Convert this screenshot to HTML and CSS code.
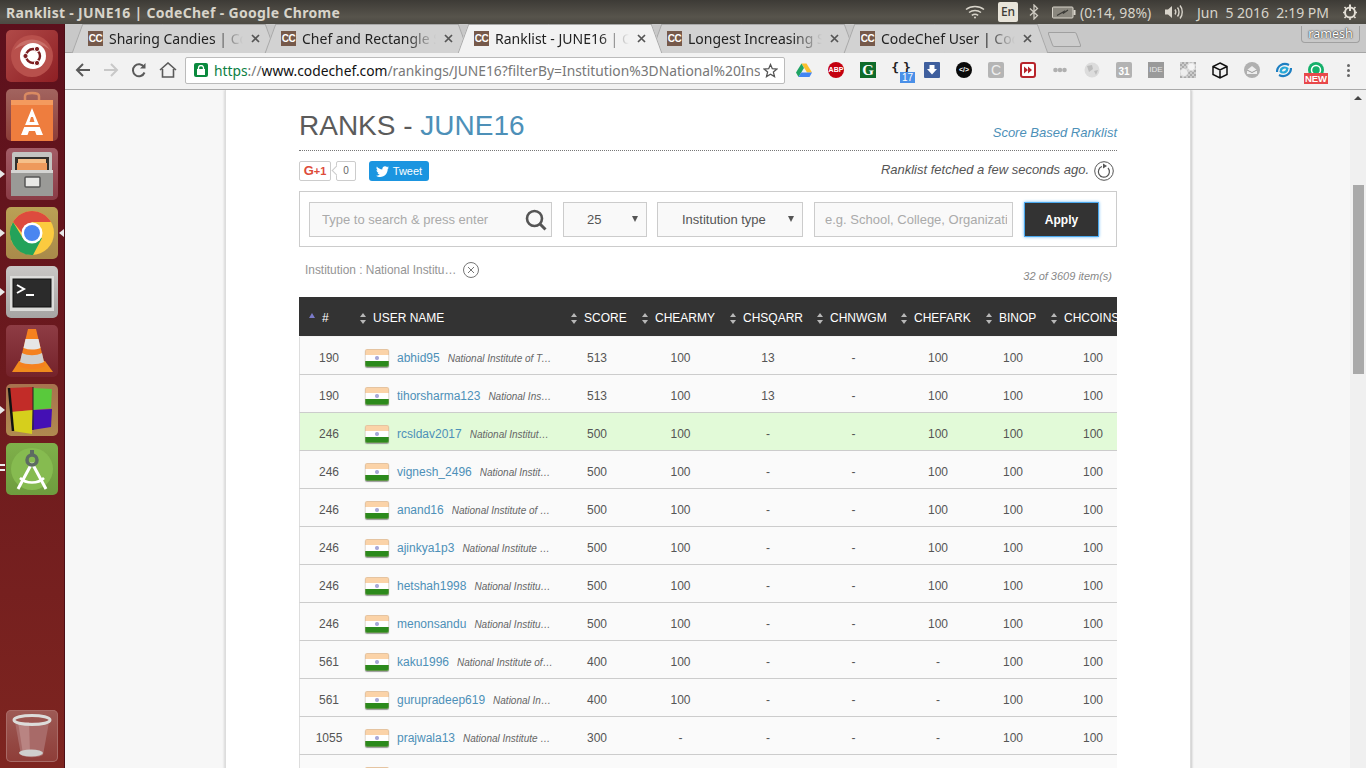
FILE: index.html
```html
<!DOCTYPE html>
<html lang="en">

<head>
    <meta charset="UTF-8">
    <title>Ranklist - JUNE16 | CodeChef - Google Chrome</title>
    <link rel="stylesheet" href="styles.css">
</head>

<body>
    <!-- top panel -->
    <header class="panel">
        <div class="panel-title">Ranklist - JUNE16 | CodeChef - Google Chrome</div>
        <div class="panel-tray">
            <svg class="tray-wifi" width="20" height="14" viewBox="0 0 20 14" fill="none" stroke="#d8d4ca" stroke-width="1.5"><path d="M1 4.5C6 0.5 14 0.5 19 4.5" /><path d="M4 7.5C7.5 4.8 12.5 4.8 16 7.5" /><path d="M6.8 10.3C8.6 9 11.4 9 13.2 10.3" /><circle cx="10" cy="12.6" r="1" fill="#d8d4ca" stroke="none" /></svg>
            <span class="tray-lang">En</span>
            <svg class="tray-bt" width="10" height="16" viewBox="0 0 10 16" fill="none" stroke="#cfcbc2" stroke-width="1.3"><path d="M1 4.5L8.5 11.5L5 15V1L8.5 4.5L1 11.5" /></svg>
            <svg class="tray-batt" width="24" height="13" viewBox="0 0 24 13"><rect x="0.5" y="1" width="20.5" height="11" rx="1" fill="#8a877e" stroke="#d8d4ca" /><rect x="21.5" y="4" width="2" height="5" fill="#d8d4ca" /><path d="M5 9.5L12 5.5L11 7.5L16 4" stroke="#3c3b37" stroke-width="1.2" fill="none" /></svg>
            <span class="tray-text tray-pct">(0:14, 98%)</span>
            <svg class="tray-vol" width="20" height="16" viewBox="0 0 20 16" fill="none" stroke="#d8d4ca" stroke-width="1.4"><path d="M1 5.5H4L8 2V14L4 10.5H1Z" fill="#d8d4ca" stroke="none" /><path d="M11 5.5C12 7 12 9 11 10.5" /><path d="M13.5 3.5C15.5 6 15.5 10 13.5 12.5" /><path d="M16 1.5C19 5 19 11 16 14.5" /></svg>
            <span class="tray-text tray-date">Jun &nbsp;5 2016 &nbsp;2:19 PM</span>
            <svg class="tray-gear" width="16" height="16" viewBox="0 0 16 16" fill="none" stroke="#e4e0d7" stroke-width="2"><circle cx="8" cy="8.5" r="5" /><path d="M8 0.5V7" stroke="#e4e0d7" /><path d="M8 13V16M1 8.5H3M13 8.5H15M2.5 3L4 4.5M13.5 3L12 4.5M2.5 14L4 12.5M13.5 14L12 12.5" stroke-width="1.6" /></svg>
        </div>
    </header>

    <div class="desktop">
        <!-- launcher -->
        <nav class="launcher">
            <div class="tile tile-dash">
                <svg width="52" height="52" viewBox="0 0 52 52"><circle cx="26" cy="26" r="21" fill="#b8504c" /><path d="M8 20C16 6 36 6 44 20C36 12 18 12 8 20Z" fill="#c9706a" /><circle cx="27" cy="26" r="13" fill="#fff" /><circle cx="27" cy="26" r="7" fill="none" stroke="#7d1f22" stroke-width="2.4" /><circle cx="19.5" cy="26" r="2.6" fill="#7d1f22" stroke="#fff" /><circle cx="31" cy="19" r="2.6" fill="#7d1f22" stroke="#fff" /><circle cx="31" cy="33" r="2.6" fill="#7d1f22" stroke="#fff" /></svg>
            </div>
            <div class="tile tile-store">
                <svg width="52" height="52" viewBox="0 0 52 52"><path d="M19 13V7C19 3 33 3 33 7V13" fill="none" stroke="#d98a62" stroke-width="2.500" /><path d="M5 11H47L47 52H5Z" fill="#ee7d3e" /><path d="M5 11H47L47 16H5Z" fill="#f49a5e" /><path d="M26 19L37 46H30.500L29 42H23L21.500 46H15Z" fill="#fff" /><path d="M25 28H27L28.500 33H23.500Z" fill="#ee7d3e" /><rect x="15" y="36" width="22" height="2" fill="#ee7d3e" /></svg>
            </div>
            <div class="tile tile-files pip-left">
                <svg width="52" height="52" viewBox="0 0 52 52"><rect x="6" y="4" width="40" height="44" rx="2" fill="#c4c4c1" /><rect x="9" y="9" width="34" height="13" fill="#33302c" /><rect x="12" y="11" width="28" height="4" fill="#f5c08a" /><rect x="11" y="15" width="30" height="7" fill="#ee9a5c" /><rect x="5" y="22" width="42" height="26" fill="#9a9a97" /><rect x="5" y="22" width="42" height="3" fill="#d4d4d2" /><rect x="19" y="29" width="15" height="10" rx="1" fill="#e8e8e6" stroke="#555" stroke-width="1.500" /></svg>
            </div>
            <div class="tile tile-chrome pip-left pip-right">
                <svg width="52" height="52" viewBox="0 0 52 52"><circle cx="26" cy="26" r="22" fill="#fcca3f" /><path d="M7 15L18 33L36 31L27 48A22 22 0 0 1 7 15Z" fill="#23a25a" /><path d="M7 15A22 22 0 0 1 45 15H26L16 26Z" fill="#dd4b3e" /><circle cx="26" cy="26" r="10.500" fill="#fff" /><circle cx="26" cy="26" r="8" fill="#4a86f0" /></svg>
            </div>
            <div class="tile tile-term pip-left">
                <svg width="52" height="52" viewBox="0 0 52 52"><rect x="4" y="10" width="44" height="35" fill="#dcdcda" /><rect x="7" y="13" width="38" height="28" fill="#2b2b2b" stroke="#111" /><path d="M11 19L18 23L11 27" fill="none" stroke="#fff" stroke-width="2" /><rect x="20" y="28" width="8" height="2" fill="#fff" /></svg>
            </div>
            <div class="tile tile-vlc">
                <svg width="52" height="52" viewBox="0 0 52 52"><path d="M6 47L13 36H39L47 47Z" fill="#f08a1c" /><path d="M22 4H30L39 41C33 45 19 45 13 41Z" fill="#f5811f" /><path d="M19.500 14H32.500L34.500 23C29 25 23 25 17.500 23Z" fill="#e6e6e6" /><path d="M16 28C22 31 30 31 36 28L38 37C32 40 20 40 14 37Z" fill="#cfcfcf" /></svg>
            </div>
            <div class="tile tile-blocks pip-left">
                <svg width="52" height="52" viewBox="0 0 52 52"><path d="M3 4L27 3V26L5 28Z" fill="#c22c28" /><path d="M27 4L46 5L45 24L27 26Z" fill="#59c93c" /><path d="M5 28L27 26L26 50L7 47Z" fill="#d6cf1c" /><path d="M27 26L46 25L45 43L26 46Z" fill="#4410b4" /><path d="M3 4L7 47" stroke="#111" stroke-width="2.500" /><path d="M27 3V46" stroke="#222" /></svg>
            </div>
            <div class="tile tile-android pip-double">
                <svg width="52" height="52" viewBox="0 0 52 52"><circle cx="26" cy="26" r="21" fill="#86bb50" /><path d="M26 20L12 46M26 20L40 46" stroke="#fff" stroke-width="3" fill="none" /><path d="M14 35C20 41 32 41 38 35" stroke="#fff" stroke-width="2.500" fill="none" /><circle cx="26" cy="17" r="5" fill="none" stroke="#5d6b62" stroke-width="3.500" /><rect x="24" y="7" width="4" height="5" fill="#5d6b62" /></svg>
            </div>
            <div class="launcher-gap"></div>
            <div class="tile tile-trash">
                <svg width="52" height="52" viewBox="0 0 52 52"><path d="M9 12L15 45C20 48 32 48 37 45L43 12Z" fill="#a86a68" /><path d="M12 12L17 44H24L23 12Z" fill="#b98482" /><ellipse cx="26" cy="10" rx="18" ry="4.500" fill="none" stroke="#dcdcda" stroke-width="3" /><ellipse cx="25" cy="43" rx="12" ry="3.500" fill="#cfcfcd" /></svg>
            </div>
        </nav>

        <div class="window">
            <!-- tabs -->
            <div class="tabstrip">
                <div class="tab">
                    <span class="favicon">CC</span>
                    <span class="tab-title">Sharing Candies | CodeChef</span>
                    <svg class="tab-close" width="9" height="9" viewBox="0 0 9 9"><path d="M1 1L8 8M8 1L1 8" /></svg>
                </div>
                <div class="tab">
                    <span class="favicon">CC</span>
                    <span class="tab-title">Chef and Rectangle Subsets</span>
                    <svg class="tab-close" width="9" height="9" viewBox="0 0 9 9"><path d="M1 1L8 8M8 1L1 8" /></svg>
                </div>
                <div class="tab tab-active">
                    <span class="favicon">CC</span>
                    <span class="tab-title">Ranklist - JUNE16 | CodeChef</span>
                    <svg class="tab-close" width="9" height="9" viewBox="0 0 9 9"><path d="M1 1L8 8M8 1L1 8" /></svg>
                </div>
                <div class="tab">
                    <span class="favicon">CC</span>
                    <span class="tab-title">Longest Increasing Subsequence</span>
                    <svg class="tab-close" width="9" height="9" viewBox="0 0 9 9"><path d="M1 1L8 8M8 1L1 8" /></svg>
                </div>
                <div class="tab">
                    <span class="favicon">CC</span>
                    <span class="tab-title">CodeChef User | CodeChef</span>
                    <svg class="tab-close" width="9" height="9" viewBox="0 0 9 9"><path d="M1 1L8 8M8 1L1 8" /></svg>
                </div>
                <div class="newtab"></div>
                <div class="profile">ramesh</div>
            </div>

            <!-- toolbar -->
            <div class="toolbar">
                <div class="nav-btns">
                    <svg width="16" height="16" viewBox="0 0 16 16" fill="none" stroke="#5a5a5a" stroke-width="2"><path d="M15 8H2M8 2L2 8L8 14" /></svg>
                    <svg width="16" height="16" viewBox="0 0 16 16" fill="none" stroke="#c8c8c8" stroke-width="2"><path d="M1 8H14M8 2L14 8L8 14" /></svg>
                    <svg width="16" height="16" viewBox="0 0 16 16" fill="none" stroke="#5a5a5a" stroke-width="2"><path d="M13.500 10.500A6 6 0 1 1 13 5" /><path d="M14.500 1V6.500H9" fill="#5a5a5a" stroke="none" /></svg>
                    <svg width="18" height="16" viewBox="0 0 18 16" fill="none" stroke="#5a5a5a" stroke-width="1.600"><path d="M1 8L9 1L17 8M3.500 7V15H14.500V7" /></svg>
                </div>
                <div class="omnibox">
                    <span class="lock"><svg width="8" height="10" viewBox="0 0 8 10"><rect y="4" width="8" height="6" fill="#fff" /><path d="M1.500 4.500V3A2.500 2.500 0 0 1 6.500 3V4.500" fill="none" stroke="#fff" stroke-width="1.300" /></svg></span>
                    <span class="url"><span class="url-https">https</span><span class="url-dim">://</span><span class="url-host">www.codechef.com</span><span class="url-dim">/rankings/JUNE16?filterBy=Institution%3DNational%20Ins</span></span>
                    <svg class="star" width="15" height="15" viewBox="0 0 15 15" fill="none" stroke="#555" stroke-width="1.300"><path d="M7.500 1.500L9.300 5.700L13.900 6.100L10.400 9.100L11.500 13.600L7.500 11.200L3.500 13.600L4.600 9.100L1.100 6.100L5.700 5.700Z" /></svg>
                </div>
                <div class="extensions">
                    <span class="ext"><svg width="16" height="15" viewBox="0 0 16 15"><path d="M5.500 0.500H10.500L16 9.500H11Z" fill="#fbc02d" /><path d="M5.500 0.500L0 9.500L2.500 14L8 5Z" fill="#1fa463" /><path d="M2.500 14H13.500L16 9.500H5.200Z" fill="#4285f4" /></svg></span>
                    <span class="ext"><span class="ext-abp">ABP</span></span>
                    <span class="ext"><span class="ext-g">G</span></span>
                    <span class="ext"><span class="ext-json">{ }</span><span class="ext-badge">17</span></span>
                    <span class="ext"><svg width="16" height="16" viewBox="0 0 16 16"><rect width="16" height="16" rx="1" fill="#3f5f9e" /><path d="M5.500 3H10.500V7H13L8 12.500L3 7H5.500Z" fill="#fff" /></svg></span>
                    <span class="ext"><span class="ext-code">&lt;/&gt;</span></span>
                    <span class="ext"><span class="ext-c">C</span></span>
                    <span class="ext"><svg width="16" height="16" viewBox="0 0 16 16"><rect x="1" y="1" width="14" height="14" rx="2" fill="#fff" stroke="#b8252c" stroke-width="2" /><path d="M4 4.500L8 8L4 11.500ZM8 4.500L12 8L8 11.500Z" fill="#b8252c" /></svg></span>
                    <span class="ext"><svg width="14" height="6" viewBox="0 0 14 6" fill="#b0b0b0"><circle cx="2.500" cy="3" r="2.300" /><circle cx="7" cy="3" r="2.300" /><circle cx="11.500" cy="3" r="2.300" /></svg></span>
                    <span class="ext"><svg width="16" height="16" viewBox="0 0 16 16"><circle cx="8" cy="8" r="7.500" fill="#dcdcdc" /><path d="M3 4L8 3L9 7L5 10ZM10 9L14 8L12 13Z" fill="#bdbdbd" /></svg></span>
                    <span class="ext"><span class="ext-cal">31</span></span>
                    <span class="ext"><span class="ext-ide">IDE</span></span>
                    <span class="ext"><span class="ext-noise"></span></span>
                    <span class="ext"><svg width="16" height="17" viewBox="0 0 16 17" fill="none" stroke="#111" stroke-width="1.500"><path d="M8 1L15 4.500V12.500L8 16L1 12.500V4.500ZM1 4.500L8 8L15 4.500M8 8V16" /></svg></span>
                    <span class="ext"><svg width="16" height="16" viewBox="0 0 16 16"><circle cx="8" cy="8" r="8" fill="#b0b0b0" /><path d="M3 8L8 4L13 8V12H3Z" fill="#eee" /><path d="M3 8L8 10.500L13 8" fill="none" stroke="#999" /></svg></span>
                    <span class="ext"><svg width="16" height="16" viewBox="0 0 16 16" fill="none" stroke-width="2.200"><path d="M1 10C1 4 7 0 13 3" stroke="#1d7fc2" /><path d="M15 6C15 12 9 16 3 13" stroke="#1d7fc2" /><path d="M5 10C4 6 9 4 12 7" stroke="#29a9d8" /><path d="M11 6C12 10 7 12 4 9" stroke="#29a9d8" /></svg></span>
                    <span class="ext"><svg width="16" height="16" viewBox="0 0 16 16"><circle cx="8" cy="8" r="8" fill="#15b06a" /><circle cx="8" cy="8" r="4.500" fill="none" stroke="#fff" stroke-width="1.500" /></svg><span class="ext-new">NEW</span></span>
                    <span class="ext ext-menu"><i></i><i></i><i></i></span>
                </div>
            </div>

            <div class="viewport">
                <div class="page">
                    <main class="sheet">
                        <div class="head-row">
                            <h1 class="ranks-title">RANKS - <a href="#">JUNE16</a></h1>
                            <a class="score-link" href="#">Score Based Ranklist</a>
                        </div>

                        <div class="share-row">
                            <div class="share-btns">
                                <span class="gplus"><b>G</b>+1</span>
                                <span class="gplus-count">0</span>
                                <span class="tweet">
                                    <svg width="13" height="11" viewBox="0 0 13 11"><path d="M13 1.500C12.500 1.700 12 1.900 11.500 1.900C12 1.600 12.400 1.100 12.600 0.500C12.100 0.800 11.500 1 11 1.100C10.500 0.500 9.800 0.200 9 0.200C7.500 0.200 6.300 1.400 6.300 2.900C6.300 3.100 6.300 3.300 6.400 3.500C4.100 3.400 2.100 2.300 0.900 0.600C0.100 1.900 0.500 3.500 1.700 4.300C1.300 4.300 0.900 4.200 0.500 4C0.500 5.300 1.400 6.400 2.700 6.700C2.300 6.800 1.900 6.800 1.500 6.700C1.800 7.800 2.900 8.500 4 8.600C2.900 9.500 1.500 9.900 0 9.700C1.200 10.500 2.600 11 4.100 11C9 11 11.800 6.800 11.700 3C12.200 2.600 12.700 2.100 13 1.500Z" fill="#fff" /></svg>
                                    Tweet
                                </span>
                            </div>
                            <div class="fetched">
                                <span>Ranklist fetched a few seconds ago.</span>
                                <svg width="20" height="20" viewBox="0 0 20 20" fill="none" stroke="#555"><circle cx="10" cy="10" r="9.300" /><path d="M8 5.500A5.500 5.500 0 1 0 14 7" stroke-width="1.200" /><path d="M9 2.500L13 5L9 7.500Z" fill="#555" stroke="none" /></svg>
                            </div>
                        </div>

                        <div class="filters">
                            <div class="search-box">
                                <input class="field search-input" type="text" placeholder="Type to search &amp; press enter">
                                <svg class="search-icon" width="22" height="22" viewBox="0 0 22 22" fill="none" stroke="#555"><circle cx="9.500" cy="9.500" r="7.500" stroke-width="2.600" /><path d="M15 15L20.500 20.500" stroke-width="3" /></svg>
                            </div>
                            <div class="select select-num">25<span class="caret"></span></div>
                            <div class="select select-type">Institution type<span class="caret"></span></div>
                            <input class="field org-input" type="text" placeholder="e.g. School, College, Organization">
                            <button class="apply" type="button">Apply</button>
                        </div>

                        <div class="filter-row">
                            <div class="tag">
                                <span>Institution : National Institu&hellip;</span>
                                <svg width="16" height="16" viewBox="0 0 16 16" fill="none" stroke="#777"><circle cx="8" cy="8" r="7.500" /><path d="M5 5L11 11M11 5L5 11" /></svg>
                            </div>
                            <div class="count">32 of 3609 item(s)</div>
                        </div>

                        <div class="table-wrap">
                            <table class="ranktable">
                                <colgroup>
                                    <col class="c-rank"><col class="c-user"><col class="c-score"><col class="c-a"><col class="c-b"><col class="c-c"><col class="c-d"><col class="c-e"><col class="c-f">
                                </colgroup>
                                <thead>
                                    <tr>
                                        <th class="th-rank"><span class="sort-up"></span>#</th>
                                        <th><span class="sort"></span>USER NAME</th>
                                        <th><span class="sort"></span>SCORE</th>
                                        <th><span class="sort"></span>CHEARMY</th>
                                        <th><span class="sort"></span>CHSQARR</th>
                                        <th><span class="sort"></span>CHNWGM</th>
                                        <th><span class="sort"></span>CHEFARK</th>
                                        <th><span class="sort"></span>BINOP</th>
                                        <th><span class="sort"></span>CHCOINS</th>
                                    </tr>
                                </thead>
                                <tbody>
                                    <tr>
                                        <td class="rank">190</td>
                                        <td class="user"><div class="user-cell"><span class="flag"></span><a href="#">abhid95</a><em>National Institute of Technology</em></div></td>
                                        <td class="score">513</td><td>100</td><td>13</td><td>-</td><td>100</td><td>100</td><td>100</td>
                                    </tr>
                                    <tr>
                                        <td class="rank">190</td>
                                        <td class="user"><div class="user-cell"><span class="flag"></span><a href="#">tihorsharma123</a><em>National Institute of Technology</em></div></td>
                                        <td class="score">513</td><td>100</td><td>13</td><td>-</td><td>100</td><td>100</td><td>100</td>
                                    </tr>
                                    <tr class="me">
                                        <td class="rank">246</td>
                                        <td class="user"><div class="user-cell"><span class="flag"></span><a href="#">rcsldav2017</a><em>National Institute of Technology</em></div></td>
                                        <td class="score">500</td><td>100</td><td>-</td><td>-</td><td>100</td><td>100</td><td>100</td>
                                    </tr>
                                    <tr>
                                        <td class="rank">246</td>
                                        <td class="user"><div class="user-cell"><span class="flag"></span><a href="#">vignesh_2496</a><em>National Institute of Technology</em></div></td>
                                        <td class="score">500</td><td>100</td><td>-</td><td>-</td><td>100</td><td>100</td><td>100</td>
                                    </tr>
                                    <tr>
                                        <td class="rank">246</td>
                                        <td class="user"><div class="user-cell"><span class="flag"></span><a href="#">anand16</a><em>National Institute of Technology</em></div></td>
                                        <td class="score">500</td><td>100</td><td>-</td><td>-</td><td>100</td><td>100</td><td>100</td>
                                    </tr>
                                    <tr>
                                        <td class="rank">246</td>
                                        <td class="user"><div class="user-cell"><span class="flag"></span><a href="#">ajinkya1p3</a><em>National Institute of Technology</em></div></td>
                                        <td class="score">500</td><td>100</td><td>-</td><td>-</td><td>100</td><td>100</td><td>100</td>
                                    </tr>
                                    <tr>
                                        <td class="rank">246</td>
                                        <td class="user"><div class="user-cell"><span class="flag"></span><a href="#">hetshah1998</a><em>National Institute of Technology</em></div></td>
                                        <td class="score">500</td><td>100</td><td>-</td><td>-</td><td>100</td><td>100</td><td>100</td>
                                    </tr>
                                    <tr>
                                        <td class="rank">246</td>
                                        <td class="user"><div class="user-cell"><span class="flag"></span><a href="#">menonsandu</a><em>National Institute of Technology</em></div></td>
                                        <td class="score">500</td><td>100</td><td>-</td><td>-</td><td>100</td><td>100</td><td>100</td>
                                    </tr>
                                    <tr>
                                        <td class="rank">561</td>
                                        <td class="user"><div class="user-cell"><span class="flag"></span><a href="#">kaku1996</a><em>National Institute of Technology</em></div></td>
                                        <td class="score">400</td><td>100</td><td>-</td><td>-</td><td>-</td><td>100</td><td>100</td>
                                    </tr>
                                    <tr>
                                        <td class="rank">561</td>
                                        <td class="user"><div class="user-cell"><span class="flag"></span><a href="#">gurupradeep619</a><em>National Institute of Technology</em></div></td>
                                        <td class="score">400</td><td>100</td><td>-</td><td>-</td><td>-</td><td>100</td><td>100</td>
                                    </tr>
                                    <tr>
                                        <td class="rank">1055</td>
                                        <td class="user"><div class="user-cell"><span class="flag"></span><a href="#">prajwala13</a><em>National Institute of Technology</em></div></td>
                                        <td class="score">300</td><td>-</td><td>-</td><td>-</td><td>-</td><td>100</td><td>100</td>
                                    </tr>
                                    <tr>
                                        <td class="rank"></td>
                                        <td class="user"><div class="user-cell"><span class="flag"></span></div></td>
                                        <td class="score"></td><td></td><td></td><td></td><td></td><td></td><td></td>
                                    </tr>
                                </tbody>
                            </table>
                        </div>
                    </main>
                </div>
                <div class="scrollbar">
                    <span class="scroll-up"></span>
                    <span class="scroll-thumb"></span>
                </div>
            </div>
        </div>
    </div>
</body>

</html>
```

FILE: styles.css
```css
* {
    box-sizing: border-box;
}

html,
body {
    height: 100%;
    margin: 0;
    overflow: hidden;
}

body {
    font-family: "Liberation Sans", Arial, sans-serif;
    display: flex;
    flex-direction: column;
    background: #f7f7f7;
}

a {
    color: #4d90b8;
    text-decoration: none;
}

/* top panel */
.panel {
    height: 24px;
    flex: none;
    display: flex;
    justify-content: space-between;
    align-items: center;
    background: linear-gradient(#3d3b36, #57544c 70%, #4c4a43);
    font-family: "Noto Sans", sans-serif;
    color: #d8d4ca;
}

.panel-title {
    padding-left: 6px;
    font-size: 14px;
    font-weight: 700;
    letter-spacing: 0.32px;
}

.panel-tray {
    display: flex;
    align-items: center;
    height: 24px;
}

.tray-wifi {
    margin-right: 13px;
}

.tray-lang {
    width: 20px;
    height: 20px;
    background: #e8e4da;
    color: #3c3b37;
    font-size: 12px;
    font-weight: 500;
    text-align: center;
    line-height: 20px;
    border-radius: 2px;
    margin-right: 11px;
}

.tray-bt {
    margin-right: 13px;
}

.tray-batt {
    margin-right: 4px;
}

.tray-text {
    font-size: 14px;
    white-space: nowrap;
}

.tray-pct {
    width: 72px;
    margin-right: 12px;
}

.tray-vol {
    margin-right: 13px;
}

.tray-date {
    width: 132px;
    margin-right: 13px;
}

.tray-gear {
    margin-right: 8px;
}

.desktop {
    flex: 1;
    min-height: 0;
    display: flex;
}

/* launcher */
.launcher {
    width: 65px;
    flex: none;
    padding: 6px 0 6px 6px;
    display: flex;
    flex-direction: column;
    gap: 7px;
    background: linear-gradient(#5c101c, #7e2520);
    border-right: 1px solid #4c0e16;
}

.launcher-gap {
    flex: 1;
}

.tile {
    width: 52px;
    height: 52px;
    flex: none;
    border-radius: 5px;
    position: relative;
}

.tile svg {
    display: block;
}

.tile-dash {
    background: linear-gradient(135deg, #b04a48, #8e1f24);
}

.tile-store {
    background: linear-gradient(#a2645f, #8c3d38);
    overflow: hidden;
}

.tile-files {
    background: linear-gradient(#a35c66, #8a3c46);
}

.tile-chrome {
    background: linear-gradient(#baa155, #a98a4a);
}

.tile-term {
    background: linear-gradient(#c9c7c5, #a6a4a3);
}

.tile-vlc {
    background: linear-gradient(#8e3c44, #74222a);
}

.tile-blocks {
    background: linear-gradient(#a8724e, #b08a50);
}

.tile-android {
    background: linear-gradient(#7fb04a, #6e9c3e);
}

.tile-trash {
    background: linear-gradient(#9e5a55, #8e3d38);
    box-shadow: inset 0 0 0 1px #a86a66;
}

.pip-left::before,
.pip-double::before {
    content: "";
    position: absolute;
    left: -6px;
    top: 22px;
    border: 4px solid transparent;
    border-left: 5px solid #e8e8e8;
    border-right: 0;
}

.pip-double::before {
    top: 21px;
    width: 5px;
    height: 7px;
    border: 0;
    background: linear-gradient(#eee 2px, transparent 2px, transparent 5px, #eee 5px);
}

.pip-right::after {
    content: "";
    position: absolute;
    right: -6px;
    top: 22px;
    border: 4px solid transparent;
    border-right: 5px solid #e8e8e8;
    border-left: 0;
}

.window {
    flex: 1;
    min-width: 0;
    display: flex;
    flex-direction: column;
}

/* tabs */
.tabstrip {
    height: 29px;
    flex: none;
    display: flex;
    padding-left: 7px;
    background: #c8c8c8;
    border-bottom: 1px solid #a6a6a6;
    position: relative;
    z-index: 0;
    font-family: "Noto Sans", sans-serif;
}

.tab {
    width: 204px;
    height: 29px;
    margin-right: -11px;
    padding: 0 16px;
    display: flex;
    align-items: center;
    position: relative;
    z-index: 1;
}

.tab::before,
.tab::after {
    content: "";
    position: absolute;
    top: 0;
    bottom: 0;
    width: 50%;
    background: #d2d2d2;
    border-top: 1px solid #a8a8a8;
    z-index: -1;
}

.tab::before {
    left: 5px;
    transform: skewX(-20deg);
    border-left: 1px solid #a8a8a8;
}

.tab::after {
    right: 5px;
    transform: skewX(20deg);
    border-right: 1px solid #a8a8a8;
}

.tab-active {
    z-index: 2;
}

.tab-active::before,
.tab-active::after {
    background: #f2f2f2;
}

.favicon {
    width: 15px;
    height: 15px;
    flex: none;
    background: #76594a;
    color: #fff;
    font: 700 10px/15px "Liberation Sans", sans-serif;
    text-align: center;
    letter-spacing: -0.4px;
}

.tab-title {
    flex: 1;
    min-width: 0;
    margin: 0 8px 0 6px;
    font-size: 14px;
    color: #222;
    white-space: nowrap;
    overflow: hidden;
    -webkit-mask-image: linear-gradient(to right, #000 78%, transparent 100%);
    mask-image: linear-gradient(to right, #000 78%, transparent 100%);
}

.tab-close {
    flex: none;
    fill: none;
    stroke: #555;
    stroke-width: 1.700;
}

.newtab {
    width: 29px;
    height: 15px;
    margin: 8px 0 0 13px;
    background: #cdcdcd;
    border: 1px solid #a0a0a0;
    border-radius: 2px;
    transform: skewX(20deg);
    position: relative;
    z-index: 1;
}

.profile {
    margin: 2px 6px 0 auto;
    width: 59px;
    height: 17px;
    border: 1px solid #a0a0a0;
    border-top: 0;
    border-radius: 0 0 4px 4px;
    color: #fff;
    font-size: 12.500px;
    line-height: 15px;
    text-align: center;
    text-shadow: 0 0 2px #222, 0 0 1px #222;
}

/* toolbar */
.toolbar {
    height: 37px;
    flex: none;
    display: flex;
    align-items: center;
    padding: 0 0 2px 10px;
    background: #f2f2f2;
    border-bottom: 1px solid #a9a9a9;
}

.nav-btns {
    width: 110px;
    flex: none;
    display: flex;
    align-items: center;
    gap: 12px;
}

.omnibox {
    width: 600px;
    height: 27px;
    flex: none;
    display: flex;
    align-items: center;
    padding: 0 6px 0 8px;
    background: #fff;
    border: 1px solid #bbb;
    border-radius: 2px;
    font-family: "Noto Sans", sans-serif;
}

.lock {
    width: 14px;
    height: 14px;
    flex: none;
    background: #0a8a3e;
    border-radius: 2px;
    display: flex;
    align-items: center;
    justify-content: center;
    margin-right: 6px;
}

.url {
    flex: 1;
    min-width: 0;
    font-size: 13.800px;
    white-space: nowrap;
    overflow: hidden;
}

.url-https {
    color: #0b8043;
}

.url-dim {
    color: #777;
}

.url-host {
    color: #111;
}

.star {
    flex: none;
    margin-left: 3px;
}

.extensions {
    display: flex;
    margin-left: 3px;
}

.ext {
    width: 32px;
    height: 24px;
    flex: none;
    display: flex;
    align-items: center;
    justify-content: center;
    position: relative;
}

.ext-abp {
    width: 16px;
    height: 16px;
    background: #c4000f;
    color: #fff;
    border-radius: 50%;
    font: 700 7px/16px "Liberation Sans", sans-serif;
    text-align: center;
}

.ext-g {
    width: 16px;
    height: 16px;
    background: #0f6b2a;
    color: #fff;
    font: 700 15px/16px "Liberation Serif", serif;
    text-align: center;
}

.ext-json {
    font: 700 13px/16px "DejaVu Sans Mono", monospace;
    color: #222;
    margin-top: -4px;
    letter-spacing: -2px;
}

.ext-badge {
    position: absolute;
    right: 1px;
    bottom: -1px;
    width: 15px;
    height: 11px;
    background: #4a90e8;
    color: #fff;
    font: 10px/11px "Liberation Sans", sans-serif;
    text-align: center;
}

.ext-code {
    width: 16px;
    height: 16px;
    background: #0a0a0a;
    color: #fff;
    border-radius: 50%;
    font: 700 7px/16px "Liberation Sans", sans-serif;
    text-align: center;
}

.ext-c {
    width: 16px;
    height: 16px;
    background: #b5b5b5;
    color: #eee;
    border-radius: 2px;
    font: 14px/16px "Liberation Sans", sans-serif;
    text-align: center;
}

.ext-cal {
    width: 16px;
    height: 16px;
    padding-top: 3px;
    background: #b3b3b3;
    color: #fff;
    border-radius: 2px;
    font: 700 10px/13px "Liberation Sans", sans-serif;
    text-align: center;
}

.ext-ide {
    width: 16px;
    height: 16px;
    background: #9a9a9a;
    color: #e8e8e8;
    font: 8px/16px "Liberation Sans", sans-serif;
    text-align: center;
}

.ext-noise {
    width: 16px;
    height: 16px;
    background:
        radial-gradient(circle at 70% 30%, #f4f4f4 3px, transparent 5px),
        radial-gradient(circle at 25% 65%, #eee 3px, transparent 5px),
        repeating-conic-gradient(#aaa 0 25%, #ccc 0 50%) 0 0 / 4px 4px;
}

.ext-new {
    position: absolute;
    left: 4px;
    bottom: -2px;
    width: 24px;
    height: 11px;
    background: #e8484a;
    color: #fff;
    font: 700 9.500px/11px "Liberation Sans", sans-serif;
    text-align: center;
}

.ext-menu {
    flex-direction: column;
    gap: 2px;
}

.ext-menu i {
    width: 3px;
    height: 3px;
    border-radius: 50%;
    background: #666;
}

/* page */
.viewport {
    flex: 1;
    min-height: 0;
    display: flex;
}

.page {
    flex: 1;
    min-width: 0;
    overflow: hidden;
    background: #f7f7f7;
    padding-left: 161px;
}

.sheet {
    width: 964px;
    min-height: 100%;
    padding: 0 73px;
    background: #fff;
    box-shadow: 0 0 0 1px #ddd, 2px 0 2px #c8c8c8, -2px 0 2px #d8d8d8;
}

.head-row {
    height: 61px;
    display: flex;
    justify-content: space-between;
    align-items: flex-end;
    padding-bottom: 10px;
    border-bottom: 1px dotted #777;
}

.ranks-title {
    margin: 0;
    font-size: 28px;
    font-weight: 400;
    line-height: 32px;
    color: #5b5b5b;
    position: relative;
    top: 2px;
}

.score-link {
    font-size: 13px;
    font-style: italic;
}

.share-row {
    height: 40px;
    display: flex;
    justify-content: space-between;
    align-items: flex-start;
    padding-top: 10px;
}

.share-btns {
    display: flex;
    align-items: center;
}

.gplus {
    width: 32px;
    height: 20px;
    border: 1px solid #ccc;
    border-radius: 2px;
    color: #dd4b39;
    font-size: 11px;
    font-weight: 700;
    line-height: 18px;
    text-align: center;
}

.gplus b {
    font-size: 13px;
}

.gplus-count {
    width: 20px;
    height: 20px;
    margin-left: 5px;
    border: 1px solid #ccc;
    border-radius: 2px;
    color: #666;
    font-size: 10px;
    line-height: 18px;
    text-align: center;
    position: relative;
    background: #fff;
}

.gplus-count::before {
    content: "";
    position: absolute;
    left: -4px;
    top: 5px;
    width: 6px;
    height: 6px;
    background: #fff;
    border-left: 1px solid #ccc;
    border-bottom: 1px solid #ccc;
    transform: rotate(45deg);
}

.tweet {
    display: flex;
    align-items: center;
    justify-content: center;
    gap: 4px;
    width: 60px;
    height: 20px;
    margin-left: 13px;
    background: #1b95e0;
    border-radius: 3px;
    color: #fff;
    font-size: 11px;
}

.fetched {
    display: flex;
    align-items: center;
    gap: 5px;
    padding-right: 3px;
    font-size: 13px;
    font-style: italic;
    color: #555;
}

.fetched span {
    margin-top: -4px;
}

.filters {
    height: 56px;
    display: flex;
    align-items: center;
    gap: 10px;
    padding: 0 17px 0 9px;
    border: 1px solid #ccc;
}

.field,
.select {
    height: 35px;
    background: #f9f9f9;
    border: 1px solid #ccc;
    font-family: inherit;
    font-size: 13px;
    color: #555;
}

.field::placeholder {
    color: #aaa;
    opacity: 1;
}

.search-box {
    position: relative;
    width: 243px;
    margin-right: 1px;
}

.search-input {
    width: 100%;
    padding: 0 12px;
    display: block;
}

.search-icon {
    position: absolute;
    right: 5px;
    top: 7px;
}

.select {
    display: flex;
    align-items: center;
    position: relative;
}

.select-num {
    width: 84px;
    padding-left: 23px;
}

.select-type {
    width: 146px;
    padding-left: 24px;
}

.caret {
    position: absolute;
    right: 8px;
    top: 13px;
    border: 3.500px solid transparent;
    border-top: 6px solid #555;
    border-bottom: 0;
}

.org-input {
    width: 199px;
    padding: 0 5px 0 10px;
    margin-left: 1px;
}

.apply {
    width: 75px;
    height: 35px;
    margin-left: 1px;
    padding: 2px 0 0;
    background: #333;
    border: 1px solid #4aa8ee;
    box-shadow: 0 0 3px #66b8f5;
    color: #fff;
    font: 700 12px "Liberation Sans", sans-serif;
}

.filter-row {
    height: 50px;
    display: flex;
    justify-content: space-between;
    align-items: flex-start;
    padding: 15px 5px 0 6px;
}

.tag {
    display: flex;
    align-items: center;
    gap: 7px;
    font-size: 11.900px;
    color: #949494;
}

.count {
    padding-top: 8px;
    font-size: 11px;
    font-style: italic;
    color: #888;
}

/* rank table */
.table-wrap {
    overflow: hidden;
}

.ranktable {
    table-layout: fixed;
    width: 839px;
    border-collapse: separate;
    border-spacing: 0;
    font-size: 12px;
    color: #555;
}

.c-rank { width: 53px; }
.c-user { width: 211px; }
.c-score { width: 71px; }
.c-a { width: 88px; }
.c-b { width: 87px; }
.c-c { width: 84px; }
.c-d { width: 85px; }
.c-e { width: 65px; }
.c-f { width: 95px; }

.ranktable th {
    height: 40px;
    padding: 2px 0 0 8px;
    background: #333;
    border-bottom: 1px solid #f4f4f4;
    color: #fff;
    font-size: 12px;
    font-weight: 400;
    text-align: left;
    white-space: nowrap;
}

.ranktable th.th-rank {
    padding-left: 10px;
}

.sort {
    display: inline-block;
    width: 6px;
    height: 11px;
    margin-right: 7px;
    vertical-align: -2px;
    position: relative;
}

.sort::before,
.sort::after {
    content: "";
    position: absolute;
    left: 0;
    border: 3px solid transparent;
}

.sort::before {
    top: 0;
    border-bottom: 4.500px solid #b8b8b8;
    border-top: 0;
}

.sort::after {
    bottom: 0;
    border-top: 4.500px solid #b8b8b8;
    border-bottom: 0;
}

.sort-up {
    display: inline-block;
    margin-right: 7px;
    vertical-align: 4px;
    border: 3px solid transparent;
    border-bottom: 5px solid #7a7ac8;
    border-top: 0;
}

.ranktable td {
    height: 38px;
    padding: 5px 0 0 5px;
    background: #fafafa;
    border-bottom: 1px solid #ccc;
    text-align: center;
}

.ranktable tr.me td {
    background: #e2fad8;
}

.ranktable td.rank {
    padding-left: 6px;
    border-left: 1px solid #ddd;
}

.ranktable td.score {
    padding-left: 0;
    padding-right: 3px;
}

.ranktable td.user {
    padding: 5px 10px 0 13px;
    text-align: left;
}

.user-cell {
    display: flex;
    align-items: center;
}

.flag {
    width: 24px;
    height: 18px;
    flex: none;
    margin-right: 8px;
    border-radius: 2px;
    box-shadow: 0 1px 1px #999, inset 0 0 0 1px rgba(190, 170, 150, 0.35);
    background:
        radial-gradient(circle at 50% 50%, #a8a8d8 1.500px, transparent 2.500px),
        linear-gradient(#fbd3a8 33%, #fff 33%, #fff 66%, #2c8a1c 66%);
}

.user-cell a {
    flex: none;
    font-size: 12px;
}

.user-cell em {
    flex: 1;
    min-width: 0;
    margin-left: 8px;
    font-size: 10px;
    color: #666;
    white-space: nowrap;
    overflow: hidden;
    text-overflow: ellipsis;
}

/* scrollbar */
.scrollbar {
    width: 16px;
    flex: none;
    background: #f0f0f0;
    position: relative;
}

.scroll-up {
    position: absolute;
    left: 4px;
    top: 6px;
    border: 4px solid transparent;
    border-bottom: 4px solid #444;
    border-top: 0;
}

.scroll-thumb {
    position: absolute;
    left: 3px;
    top: 95px;
    width: 11px;
    height: 189px;
    background: #a9a9a9;
}
```
